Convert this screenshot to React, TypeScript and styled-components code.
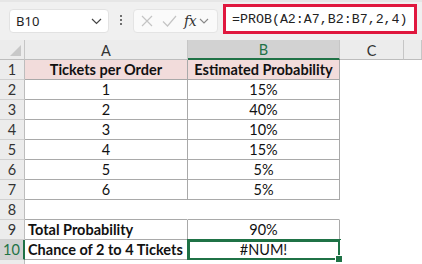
import React from "react";
import styled, { createGlobalStyle, css } from "styled-components";

const Global = createGlobalStyle`
  html, body { margin: 0; padding: 0; background: #ffffff; overflow: hidden; }
  body { width: 422px; height: 264px; font-family: "Lato", "Liberation Sans", sans-serif; }
  * { box-sizing: border-box; }
`;

const GREEN = "#1f7246";
const LINE = "#a9a9a9";

const Page = styled.div`
  width: 422px;
  height: 264px;
  display: flex;
  flex-direction: column;
  overflow: hidden;
`;

const Toolbar = styled.div`
  height: 40px;
  flex: none;
  background: #f0f0f0;
  border-top: 2px solid #e6e6e6;
  display: flex;
  align-items: flex-start;
  padding: 2px 0 0 9px;
`;

const NameBox = styled.div`
  margin-top: 5px;
  width: 100px;
  height: 24px;
  background: #ffffff;
  border: 1px solid #e2e2e2;
  border-radius: 4px;
  display: flex;
  align-items: center;
  justify-content: space-between;
  padding: 0 6px 0 6px;
  font-family: "Noto Sans", "Open Sans", sans-serif;
  font-size: 13px;
  color: #222;
`;

const Dots = styled.div`
  margin: 11px 0 0 0;
  width: 24px;
  display: flex;
  flex-direction: column;
  align-items: center;
  gap: 2px;
  & > span {
    width: 2px;
    height: 2px;
    background: #444;
    border-radius: 1px;
  }
`;

const IconBox = styled.div`
  margin-top: 5px;
  width: 85px;
  height: 24px;
  background: #fafafa;
  border: 1px solid #e4e4e4;
  border-radius: 4px;
  display: flex;
  align-items: center;
  padding-left: 5px;
`;

const CheckIcon = styled.svg`
  margin-left: 5px;
`;

const Fx = styled.span`
  font-family: "DejaVu Serif", "Liberation Serif", serif;
  font-style: italic;
  font-size: 14px;
  color: #333;
  margin-left: 4px;
  letter-spacing: -0.5px;
`;

const FxChevron = styled.span`
  margin-left: 3px;
  display: flex;
`;

const FormulaBox = styled.div`
  margin-left: 5px;
  width: 194px;
  height: 30px;
  border: 3px solid #e0183f;
  background: #ffffff;
  display: flex;
  align-items: center;
  padding-left: 6px;
  font-family: "Liberation Mono", "DejaVu Sans Mono", monospace;
  font-size: 13.3px;
  color: #222;
  white-space: nowrap;
`;

const Grid = styled.div`
  display: grid;
  grid-template-columns: 25px 163px 152px 64px 1fr;
  grid-auto-rows: 20px;
  flex: 1;
`;

const HeadCell = styled.div<{ $sel?: boolean }>`
  background: #ececec;
  border-right: 1px solid #c6c6c6;
  border-bottom: 1px solid #bdbdbd;
  display: flex;
  align-items: center;
  justify-content: center;
  font-family: "Lato", "Liberation Sans", sans-serif;
  font-size: 14.5px;
  color: #333;
  padding-top: 1px;
  ${(p) =>
    p.$sel &&
    css`
      background: #d2d2d2;
      color: ${GREEN};
      border-bottom: 2px solid ${GREEN};
    `}
`;

const Corner = styled.div`
  background: #ececec;
  border-right: 1px solid #c6c6c6;
  border-bottom: 1px solid #bdbdbd;
  position: relative;
  &::after {
    content: "";
    position: absolute;
    right: 3px;
    bottom: 3px;
    width: 0;
    height: 0;
    border-left: 11px solid transparent;
    border-bottom: 11px solid #c8c8c8;
  }
`;

const RowHead = styled.div<{ $sel?: boolean }>`
  background: #ececec;
  border-right: 1px solid #bdbdbd;
  border-bottom: 1px solid #d0d0d0;
  display: flex;
  align-items: center;
  justify-content: center;
  font-size: 14.5px;
  color: #333;
  ${(p) =>
    p.$sel &&
    css`
      background: #d2d2d2;
      color: ${GREEN};
      border-right: 2px solid ${GREEN};
    `}
`;

const Cell = styled.div<{
  $r?: boolean;
  $b?: boolean;
  $head?: boolean;
  $bold?: boolean;
  $left?: boolean;
  $sel?: boolean;
}>`
  position: relative;
  display: flex;
  align-items: center;
  justify-content: ${(p) => (p.$left ? "flex-start" : "center")};
  padding-left: ${(p) => (p.$left ? "3px" : "0")};
  font-size: 14.5px;
  color: #111;
  font-weight: ${(p) => (p.$bold ? 700 : 400)};
  background: ${(p) => (p.$head ? "#f2dcdb" : "#ffffff")};
  border-right: 1px solid ${(p) => (p.$r ? LINE : "transparent")};
  border-bottom: 1px solid ${(p) => (p.$b ? LINE : "transparent")};
  white-space: nowrap;
  ${(p) =>
    p.$sel &&
    css`
      &::after {
        content: "";
        position: absolute;
        left: -1px;
        top: -1px;
        right: -2px;
        bottom: -2px;
        border: 3px solid ${GREEN};
        pointer-events: none;
      }
      &::before {
        content: "";
        position: absolute;
        right: -4px;
        bottom: -4px;
        width: 6px;
        height: 6px;
        background: ${GREEN};
        border: 1px solid #ffffff;
        z-index: 2;
      }
    `}
`;

const Chevron = () => (
  <svg width="11" height="7" viewBox="0 0 11 7">
    <path d="M1 1 L5.5 5.5 L10 1" fill="none" stroke="#444" strokeWidth="1.2" />
  </svg>
);

const rows: [string, string][] = [
  ["1", "15%"],
  ["2", "40%"],
  ["3", "10%"],
  ["4", "15%"],
  ["5", "5%"],
  ["6", "5%"],
];

export default function App() {
  return (
    <Page>
      <Global />
      <Toolbar>
        <NameBox>
          <span>B10</span>
          <Chevron />
        </NameBox>
        <Dots>
          <span />
          <span />
          <span />
        </Dots>
        <IconBox>
          <svg width="16" height="16" viewBox="0 0 16 16">
            <path d="M3 3 L13 13 M13 3 L3 13" stroke="#c4c4c4" strokeWidth="1.2" fill="none" />
          </svg>
          <CheckIcon width="20" height="16" viewBox="0 0 20 16">
            <path d="M3 8.5 L7.5 13 L16 3" stroke="#c4c4c4" strokeWidth="1.2" fill="none" />
          </CheckIcon>
          <Fx>fx</Fx>
          <FxChevron>
            <svg width="10" height="7" viewBox="0 0 10 7">
              <path d="M1 1 L5 5 L9 1" fill="none" stroke="#888" strokeWidth="1.1" />
            </svg>
          </FxChevron>
        </IconBox>
        <FormulaBox>=PROB(A2:A7,B2:B7,2,4)</FormulaBox>
      </Toolbar>
      <Grid>
        <Corner />
        <HeadCell>A</HeadCell>
        <HeadCell $sel>B</HeadCell>
        <HeadCell>C</HeadCell>
        <HeadCell />

        <RowHead>1</RowHead>
        <Cell $head $bold $r $b>Tickets per Order</Cell>
        <Cell $head $bold $r $b>Estimated Probability</Cell>
        <Cell />
        <Cell />

        {rows.map(([a, b], i) => (
          <React.Fragment key={i}>
            <RowHead>{i + 2}</RowHead>
            <Cell $r $b>{a}</Cell>
            <Cell $r $b>{b}</Cell>
            <Cell />
            <Cell />
          </React.Fragment>
        ))}

        <RowHead>8</RowHead>
        <Cell $b />
        <Cell $b />
        <Cell />
        <Cell />

        <RowHead>9</RowHead>
        <Cell $r $b $bold $left>Total Probability</Cell>
        <Cell $r $b>90%</Cell>
        <Cell />
        <Cell />

        <RowHead $sel>10</RowHead>
        <Cell $r $b $bold $left>Chance of 2 to 4 Tickets</Cell>
        <Cell $r $b $sel>#NUM!</Cell>
        <Cell />
        <Cell />

        <RowHead />
        <Cell />
        <Cell />
        <Cell />
        <Cell />
      </Grid>
    </Page>
  );
}
